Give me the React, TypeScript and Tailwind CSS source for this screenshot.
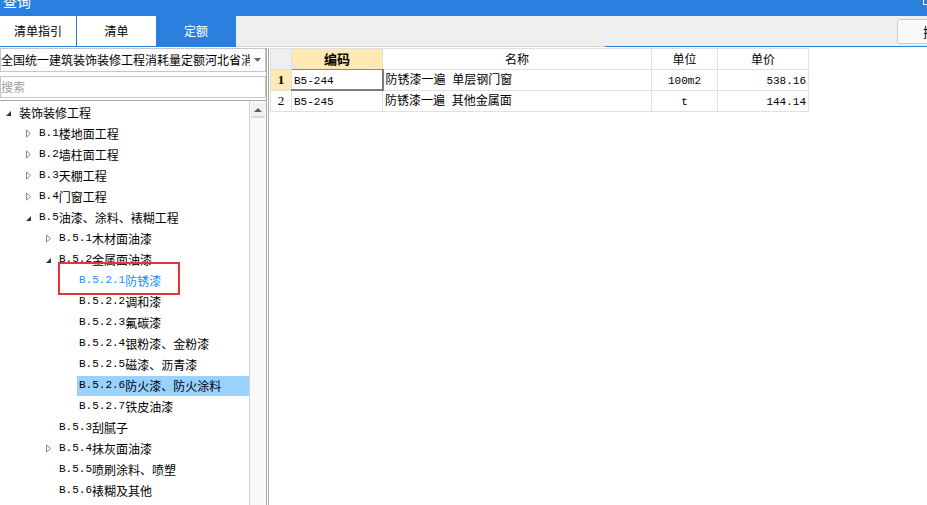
const CJK = "font-['Noto_Sans_CJK_SC',sans-serif]";

// split text into latin runs (mono, narrow) and CJK runs
const Mix = ({ text }: { text: string }) => {
    const parts = text.match(/[\x20-\x7e]+|[^\x20-\x7e]+/g) || [];
    return (
        <>
            {parts.map((p, i) =>
                /^[\x20-\x7e]+$/.test(p) ? (
                    <span key={i} className="font-['Liberation_Mono',monospace] text-[11px]">{p}</span>
                ) : (
                    <span key={i} className="text-[12px]">{p}</span>
                )
            )}
        </>
    );
};

type Node = { lvl: number; label: string; icon?: "open" | "closed"; blue?: boolean; selected?: boolean };

const tree: Node[] = [
    { lvl: 0, label: "装饰装修工程", icon: "open" },
    { lvl: 1, label: "B.1楼地面工程", icon: "closed" },
    { lvl: 1, label: "B.2墙柱面工程", icon: "closed" },
    { lvl: 1, label: "B.3天棚工程", icon: "closed" },
    { lvl: 1, label: "B.4门窗工程", icon: "closed" },
    { lvl: 1, label: "B.5油漆、涂料、裱糊工程", icon: "open" },
    { lvl: 2, label: "B.5.1木材面油漆", icon: "closed" },
    { lvl: 2, label: "B.5.2金属面油漆", icon: "open" },
    { lvl: 3, label: "B.5.2.1防锈漆", blue: true },
    { lvl: 3, label: "B.5.2.2调和漆" },
    { lvl: 3, label: "B.5.2.3氟碳漆" },
    { lvl: 3, label: "B.5.2.4银粉漆、金粉漆" },
    { lvl: 3, label: "B.5.2.5磁漆、沥青漆" },
    { lvl: 3, label: "B.5.2.6防火漆、防火涂料", selected: true },
    { lvl: 3, label: "B.5.2.7铁皮油漆" },
    { lvl: 2, label: "B.5.3刮腻子" },
    { lvl: 2, label: "B.5.4抹灰面油漆", icon: "closed" },
    { lvl: 2, label: "B.5.5喷刷涂料、喷塑" },
    { lvl: 2, label: "B.5.6裱糊及其他" },
];

const indent = ["pl-[3px]", "pl-[23px]", "pl-[43px]", "pl-[63px]"];

const TreeIcon = ({ kind }: { kind?: "open" | "closed" }) => (
    <span className="w-[14px] h-[21px] flex items-center justify-start shrink-0">
        {kind === "open" && (
            <svg width="7" height="7" viewBox="0 0 7 7" className="ml-[2px] mt-[2px]">
                <path d="M6 1 L6 6 L1 6 Z" fill="#333" />
            </svg>
        )}
        {kind === "closed" && (
            <svg width="7" height="9" viewBox="0 0 7 9" className="ml-[2px]">
                <path d="M1.5 1 L5.5 4.5 L1.5 8 Z" fill="none" stroke="#8a8a8a" strokeWidth="1" />
            </svg>
        )}
    </span>
);

const rows = [
    { n: "1", code: "B5-244", name: "防锈漆一遍 单层钢门窗", unit: "100m2", price: "538.16" },
    { n: "2", code: "B5-245", name: "防锈漆一遍 其他金属面", unit: "t", price: "144.14" },
];

export default function App() {
    return (
        <div className={`w-[927px] h-[505px] overflow-hidden flex flex-col bg-white text-black ${CJK}`}>
            {/* title bar */}
            <div className="h-[16px] bg-[#2b7fde] relative overflow-hidden shrink-0">
                <span className="block pl-[3px] text-white text-[14px] leading-[16px] -mt-[7px]">查询</span>
                <span className="absolute right-[-4px] top-[-4px] w-[8px] h-[9px] border border-white" />
            </div>
            {/* tabs */}
            <div className="h-[30px] flex bg-[#efefef] shrink-0 text-[12px] overflow-hidden">
                <div className="w-[76px] bg-white flex items-center justify-center">清单指引</div>
                <div className="w-[1px] bg-[#2b7fde]" />
                <div className="w-[79px] bg-white flex items-center justify-center">清单</div>
                <div className="w-[80px] bg-[#2b7fde] text-white flex items-center justify-center">定额</div>
                <div className="ml-auto mr-[-22px] mt-[3px] h-[25px] w-[52px] shrink-0 rounded-[3px] border border-[#c5cad6] bg-[#fafafa] flex items-center pl-[25px] text-[13px] whitespace-nowrap">插入</div>
            </div>
            <div className="h-[1px] flex shrink-0">
                <div className="w-[236px] bg-[#2b7fde]" />
                <div className="w-[369px] bg-[#d6d6d6]" />
                <div className="flex-1 bg-[#2b7fde]" />
            </div>
            {/* main */}
            <div className="flex flex-1 min-h-0 pt-[1px]">
                {/* left pane */}
                <div className="w-[269px] shrink-0 flex flex-col border-r-[3px] border-double border-[#a8a8a8]">
                    <div className="h-[24px] border border-[#c6c6c6] flex items-center overflow-hidden">
                        <span className="flex-1 whitespace-nowrap overflow-hidden text-[12px]">全国统一建筑装饰装修工程消耗量定额河北省消耗量定额</span>
                        <svg width="7" height="4" viewBox="0 0 7 4" className="mx-[4px] shrink-0">
                            <path d="M0 0 L7 0 L3.5 4 Z" fill="#666" />
                        </svg>
                    </div>
                    <div className="h-[22px] mt-[4px] border border-[#c6c6c6] flex items-center text-[12px] text-[#a0a0a0]">搜索</div>
                    <div className="flex-1 mt-[2px] border-t border-[#a8a8a8] flex min-h-0 relative">
                        <div className="flex-1 pt-[1px]">
                            {tree.map((t, i) => (
                                <div key={i} className={`h-[21px] flex items-center ${indent[t.lvl]}`}>
                                    <TreeIcon kind={t.icon} />
                                    <span
                                        className={`flex-1 h-[20px] flex items-center px-[2px] whitespace-nowrap ${
                                            t.selected ? "bg-[#99d1ff]" : ""
                                        } ${t.blue ? "text-[#1a8cff]" : "text-black"}`}
                                    >
                                        <Mix text={t.label} />
                                    </span>
                                </div>
                            ))}
                        </div>
                        {/* scrollbar */}
                        <div className="w-[17px] shrink-0 bg-[#f9f9f9] border-l border-[#d0d0d0] pt-[2px]">
                            <div className="h-[15px] mx-[1px] bg-[#f0f0f0] border-b-2 border-[#d8d8d8] flex items-center justify-center">
                                <svg width="8" height="4" viewBox="0 0 8 4">
                                    <path d="M0 4 L4 0 L8 4 Z" fill="#606060" />
                                </svg>
                            </div>
                        </div>
                        {/* annotation */}
                        <div className="absolute left-[58px] top-[161px] w-[122px] h-[33px] border-2 border-[#e8323a]" />
                    </div>
                </div>
                {/* right pane: table */}
                <div className="flex-1 min-w-0 pl-[1px]">
                    <table className="border-collapse table-fixed text-[12px]">
                        <colgroup>
                            <col className="w-[21px]" />
                            <col className="w-[91px]" />
                            <col className="w-[269px]" />
                            <col className="w-[66px]" />
                            <col className="w-[91px]" />
                        </colgroup>
                        <thead>
                            <tr className="h-[20px]">
                                <th className="bg-[#efefef] border border-[#e0e0e0]" />
                                <th className="bg-[#fee9b5] border border-[#e0e0e0] border-b-[#3ba0e0] font-bold text-[13px]">编码</th>
                                <th className="border border-[#e0e0e0] font-normal">名称</th>
                                <th className="border border-[#e0e0e0] font-normal">单位</th>
                                <th className="border border-[#e0e0e0] font-normal">单价</th>
                            </tr>
                        </thead>
                        <tbody>
                            {rows.map((r, i) => (
                                <tr key={r.n} className="h-[20px]">
                                    <td
                                        className={`border border-[#e0e0e0] text-center font-['Liberation_Serif',serif] text-[13px] ${
                                            i === 0 ? "bg-[#fee9b5] font-bold" : ""
                                        }`}
                                    >
                                        {r.n}
                                    </td>
                                    <td
                                        className={`pl-[2px] border border-[#e0e0e0] ${
                                            i === 0 ? "border-l-[#3ba0e0] border-r-2 border-r-[#7c7c7c] border-b-2 border-b-[#7c7c7c]" : ""
                                        }`}
                                    >
                                        <Mix text={r.code} />
                                    </td>
                                    <td className="pl-[2px] border border-[#e0e0e0] whitespace-nowrap">
                                        <Mix text={r.name} />
                                    </td>
                                    <td className="border border-[#e0e0e0] text-center">
                                        <Mix text={r.unit} />
                                    </td>
                                    <td className="pr-[2px] border border-[#e0e0e0] text-right">
                                        <Mix text={r.price} />
                                    </td>
                                </tr>
                            ))}
                        </tbody>
                    </table>
                </div>
            </div>
        </div>
    );
}
